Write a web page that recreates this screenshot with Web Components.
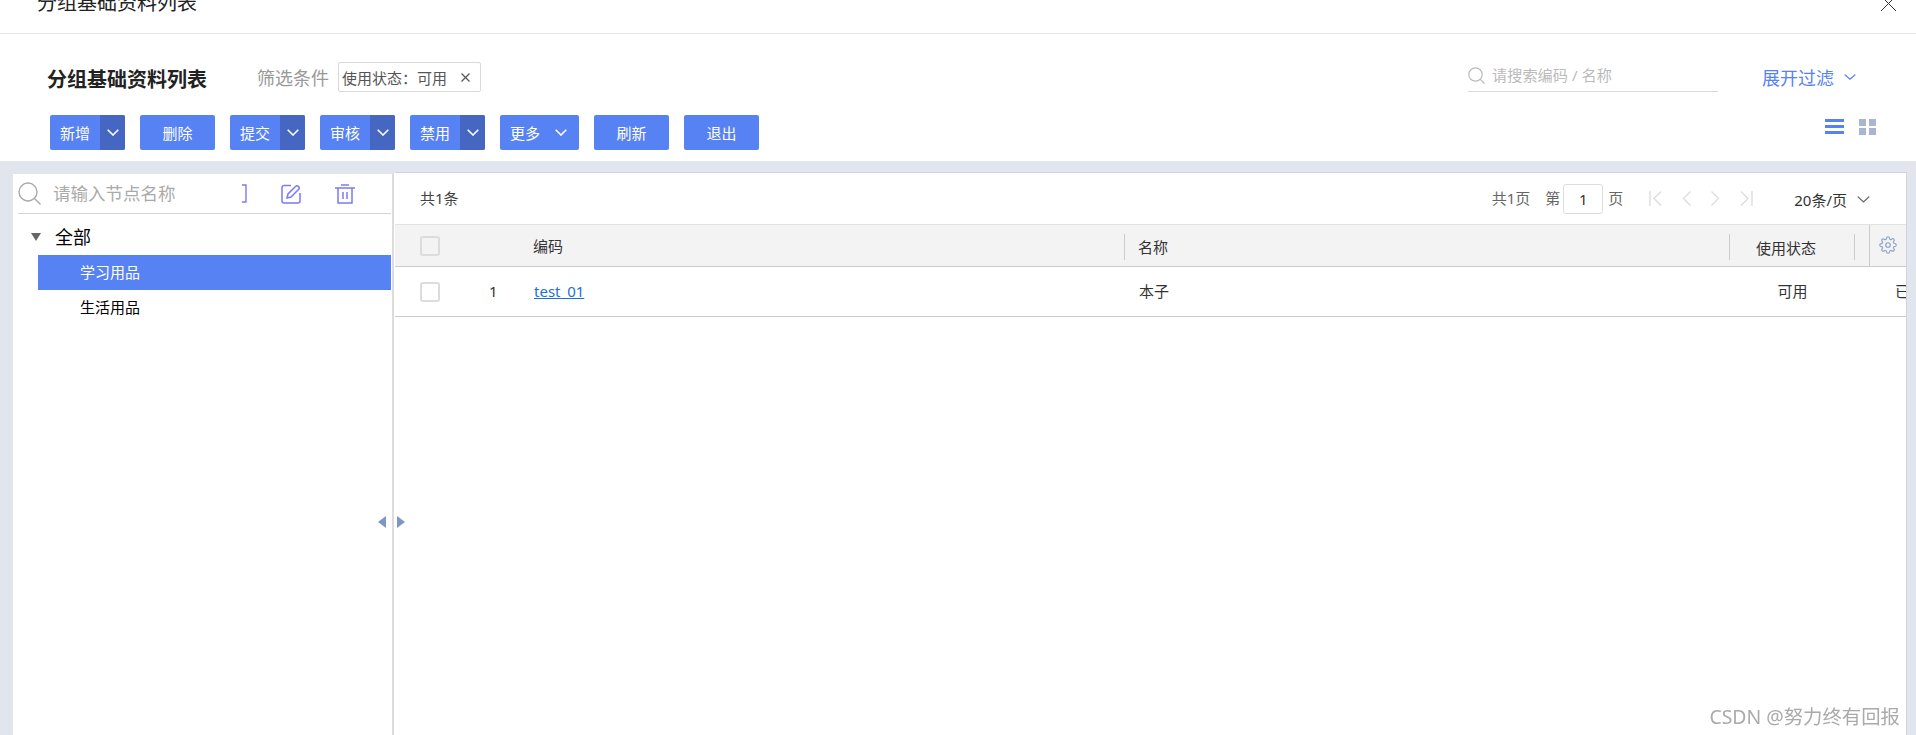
<!DOCTYPE html>
<html lang="zh">
<head>
<meta charset="utf-8">
<title>分组基础资料列表</title>
<style>
  html, body { margin: 0; height: 100%; overflow: hidden; background: #fff; }
  body {
    display: flex;
    flex-direction: column;
    font-family: "Noto Sans", "Noto Sans CJK SC", sans-serif;
    color: #333;
  }
</style>
</head>
<body>
<modal-head>分组基础资料列表</modal-head>
<list-toolbar></list-toolbar>
<main-area>
  <tree-panel slot="left"></tree-panel>
  <grid-panel slot="right"></grid-panel>
</main-area>
<water-mark>CSDN @努力终有回报</water-mark>

<script>
const chevron = (w, h, color, sw) => `
  <svg width="${w}" height="${h}" viewBox="0 0 12 7" fill="none" stroke="${color}" stroke-width="${sw}" preserveAspectRatio="none"><path d="M.7.7 6 6l5.3-5.3"/></svg>`;

class modalHead extends HTMLElement {
  constructor() {
    super();
    this.shadowDOM = this.attachShadow({ mode: "open" });
  }
  connectedCallback() {
    this.shadowDOM.innerHTML = `
      <style>
        :host {
          display: flex;
          flex: none;
          justify-content: space-between;
          height: 33px;
          border-bottom: 1px solid #e8e8e8;
          padding: 0 20px 0 37px;
          overflow: hidden;
          color: #222;
        }
        .title { font-size: 20px; line-height: 20px; margin-top: -7px; }
        svg { margin-top: -4px; }
      </style>
      <div class="title"><slot></slot></div>
      <svg width="15" height="15" viewBox="0 0 15 15" stroke="#333" fill="none"><path d="M0 0 15 15M15 0 0 15"/></svg>`;
  }
}
customElements.define("modal-head", modalHead);

class toolButton extends HTMLElement {
  constructor() {
    super();
    this.shadowDOM = this.attachShadow({ mode: "open" });
  }
  connectedCallback() {
    const kind = this.getAttribute("kind") || "plain";
    let tail = "";
    if (kind === "split") tail = `<span class="drop">${chevron(12, 7, "#fff", 1.6)}</span>`;
    if (kind === "more") tail = `<span class="more">${chevron(12, 7, "#fff", 1.6)}</span>`;
    this.shadowDOM.innerHTML = `
      <style>
        :host {
          display: flex;
          flex: none;
          width: ${kind === "more" ? 79 : 75}px;
          height: 35px;
          border-radius: 2px;
          overflow: hidden;
          background: #5782f3;
          color: #fff;
          font-size: 15px;
        }
        .text { flex: 1; display: flex; align-items: center; justify-content: center; }
        .drop { flex: none; width: 25px; background: #4567c1; display: flex; align-items: center; justify-content: center; }
        .more { flex: none; width: 24px; padding-left: 15px; display: flex; align-items: center; }
        :host([kind="more"]) .text { flex: none; width: 40px; justify-content: flex-end; }
      </style>
      <span class="text"><slot></slot></span>${tail}`;
  }
}
customElements.define("tool-button", toolButton);

class filterTag extends HTMLElement {
  constructor() {
    super();
    this.shadowDOM = this.attachShadow({ mode: "open" });
  }
  connectedCallback() {
    this.shadowDOM.innerHTML = `
      <style>
        :host {
          display: flex;
          align-items: center;
          justify-content: space-between;
          box-sizing: border-box;
          width: 143px;
          height: 30px;
          padding: 0 10px 0 3px;
          border: 1px solid #d9d9d9;
          border-radius: 2px;
          font-size: 15px;
          color: #555;
          white-space: nowrap;
        }
      </style>
      <slot></slot>
      <svg width="9" height="9" viewBox="0 0 9 9" stroke="#555" stroke-width="1.2"><path d="M.5.5l8 8M8.5.5l-8 8"/></svg>`;
  }
}
customElements.define("filter-tag", filterTag);

class listToolbar extends HTMLElement {
  constructor() {
    super();
    this.shadowDOM = this.attachShadow({ mode: "open" });
  }
  connectedCallback() {
    this.shadowDOM.innerHTML = `
      <style>
        :host {
          display: block;
          flex: none;
          height: 127px;
          box-sizing: border-box;
          padding-top: 28px;
        }
        .top, .bottom { display: flex; align-items: center; }
        .top { height: 30px; padding: 0 60px 0 47px; }
        .bottom { height: 35px; margin-top: 23px; padding: 0 40px 0 50px; gap: 15px; }
        .title { font-size: 20px; font-weight: 700; color: #222; width: 160px; margin: 2px 50px 0 0; white-space: nowrap; }
        .label { font-size: 18px; color: #999; margin-right: 9px; white-space: nowrap; }
        .search {
          margin-left: auto;
          box-sizing: border-box;
          width: 250px;
          height: 30px;
          padding-bottom: 2px;
          border-bottom: 1px solid #d9d9d9;
          display: flex;
          align-items: center;
          gap: 7px;
          font-size: 15.2px;
          color: #bbb;
          white-space: nowrap;
        }
        .search span { margin-top: -3px; }
        .expand {
          margin-left: 44px;
          font-size: 18px;
          color: #5782f3;
          display: flex;
          align-items: center;
          gap: 10px;
          white-space: nowrap;
        }
        .views { margin-left: auto; display: flex; gap: 15px; align-self: flex-start; margin-top: 4px; }
      </style>
      <div class="top">
        <div class="title">分组基础资料列表</div>
        <div class="label">筛选条件</div>
        <filter-tag>使用状态：可用</filter-tag>
        <div class="search">
          <svg width="17" height="17" viewBox="0 0 17 17" fill="none" stroke="#bbb" stroke-width="1.2"><circle cx="7.5" cy="7.5" r="6.7"/><path d="M12.3 12.3 16.5 16.5"/></svg>
          <span>请搜索编码 / 名称</span>
        </div>
        <div class="expand">展开过滤 ${chevron(12, 6, "#5782f3", 1.4)}</div>
      </div>
      <div class="bottom">
        <tool-button kind="split">新增</tool-button>
        <tool-button>删除</tool-button>
        <tool-button kind="split">提交</tool-button>
        <tool-button kind="split">审核</tool-button>
        <tool-button kind="split">禁用</tool-button>
        <tool-button kind="more">更多</tool-button>
        <tool-button>刷新</tool-button>
        <tool-button>退出</tool-button>
        <div class="views">
          <svg width="19" height="16" viewBox="0 0 19 16" fill="#5782f3"><rect width="19" height="3"/><rect y="6" width="19" height="3"/><rect y="12" width="19" height="3"/></svg>
          <svg width="17" height="16" viewBox="0 0 17 16" fill="#a9b5d3"><rect width="7" height="7"/><rect x="10" width="7" height="7"/><rect y="9" width="7" height="7"/><rect x="10" y="9" width="7" height="7"/></svg>
        </div>
      </div>`;
  }
}
customElements.define("list-toolbar", listToolbar);

class mainArea extends HTMLElement {
  constructor() {
    super();
    this.shadowDOM = this.attachShadow({ mode: "open" });
  }
  connectedCallback() {
    this.shadowDOM.innerHTML = `
      <style>
        :host {
          display: flex;
          flex: 1;
          min-height: 0;
          box-sizing: border-box;
          background: #e1e5ee;
          padding: 11px 9px 0 13px;
        }
        .left { width: 379px; flex: none; margin-top: 2px; background: #fff; position: relative; }
        .bar { width: 2px; flex: none; margin-top: 1px; background: #dcdcdc; }
        .right { flex: 1; min-width: 0; position: relative; }
        .arrow { position: absolute; width: 0; height: 0; border: 6px solid transparent; }
        .arrow.l { top: 342px; right: 6px; border-left: 0; border-right: 8px solid #7d96c4; }
        .arrow.r { top: 344px; left: 3px; border-right: 0; border-left: 8px solid #7d96c4; z-index: 2; }
      </style>
      <div class="left"><slot name="left"></slot><i class="arrow l"></i></div>
      <div class="bar"></div>
      <div class="right"><i class="arrow r"></i><slot name="right"></slot></div>`;
  }
}
customElements.define("main-area", mainArea);

class treePanel extends HTMLElement {
  constructor() {
    super();
    this.shadowDOM = this.attachShadow({ mode: "open" });
  }
  connectedCallback() {
    this.shadowDOM.innerHTML = `
      <style>
        :host { display: block; color: #000; }
        .search {
          display: flex;
          align-items: center;
          height: 39px;
          margin-left: 5px;
          margin-right: 1px;
          border-bottom: 1px solid #d4d4d4;
          font-size: 17.5px;
          color: #aaa;
          white-space: nowrap;
        }
        .search .hint { margin: -2px 0 0 12px; width: 189px; }
        .search svg.mag { margin-top: -1px; flex: none; }
        .ico { flex: none; }
        .root {
          display: flex;
          align-items: center;
          box-sizing: border-box;
          height: 41px;
          padding: 2px 0 0 18px;
          font-size: 18px;
          gap: 14px;
        }
        .root i { width: 0; height: 0; margin-top: 2px; border: 5px solid transparent; border-top: 8px solid #666; border-bottom: 0; }
        .node { height: 35px; line-height: 35px; margin-left: 25px; margin-right: 1px; padding-left: 42px; font-size: 15px; }
        .node.on { background: #5782f3; color: #fff; }
      </style>
      <div class="search">
        <svg class="mag" width="23" height="23" viewBox="0 0 23 23" fill="none" stroke="#aaa" stroke-width="1.4"><circle cx="10" cy="10" r="9"/><path d="M16.5 16.5 22.5 22.5"/></svg>
        <span class="hint">请输入节点名称</span>
        <svg class="ico" width="5" height="19" viewBox="0 0 5 19" fill="none" stroke="#7b7bf5" stroke-width="1.4"><path d="M0 1h4v17H0"/></svg>
        <svg class="ico" style="margin-left:34px" width="20" height="20" viewBox="0 0 20 20" fill="none" stroke="#7b7bf5" stroke-width="1.5"><path d="M10 1.500H3A2 2 0 0 0 1 3.500V17a2 2 0 0 0 2 2h14a2 2 0 0 0 2-2V9"/><path d="M6 14l1-4L14.500 2.500a2 2 0 0 1 3 3L10 13z"/></svg>
        <svg class="ico" style="margin-left:34px" width="20" height="20" viewBox="0 0 20 20" fill="none" stroke="#7b7bf5" stroke-width="1.5"><path d="M0 4h20M6 1h8M3 4v15h14V4M8 8v7M12 8v7"/></svg>
      </div>
      <div class="root"><i></i><span>全部</span></div>
      <div class="node on">学习用品</div>
      <div class="node">生活用品</div>`;
  }
}
customElements.define("tree-panel", treePanel);

class checkBox extends HTMLElement {
  constructor() {
    super();
    this.shadowDOM = this.attachShadow({ mode: "open" });
  }
  connectedCallback() {
    this.shadowDOM.innerHTML = `
      <style>
        :host {
          display: block;
          box-sizing: border-box;
          width: 20px;
          height: 20px;
          border: 2px solid #dcdcdc;
          border-radius: 3px;
          background: transparent;
        }
      </style>`;
  }
}
customElements.define("check-box", checkBox);

class pagerBar extends HTMLElement {
  constructor() {
    super();
    this.shadowDOM = this.attachShadow({ mode: "open" });
  }
  connectedCallback() {
    const arrow = (d, w) => `<svg width="${w}" height="15" viewBox="0 0 ${w} 15" fill="none" stroke="#ddd" stroke-width="1.4"><path d="${d}"/></svg>`;
    this.shadowDOM.innerHTML = `
      <style>
        :host {
          display: flex;
          align-items: center;
          height: 49px;
          padding: 0 36px 2px 25px;
          font-size: 15px;
          color: #666;
          white-space: nowrap;
        }
        .count { color: #444; margin-right: auto; }
        .page {
          box-sizing: border-box;
          width: 40px;
          height: 30px;
          margin: 2px 5px 0 3px;
          border: 1px solid #ddd;
          border-radius: 3px;
          text-align: center;
          line-height: 28px;
          color: #333;
        }
        .nav { display: flex; align-items: center; gap: 20px; margin: 2px 41px 0 26px; }
        .size { color: #333; display: flex; align-items: center; gap: 10px; margin-top: 3px; }
        .gap { margin-right: 15px; }
      </style>
      <span class="count">共1条</span>
      <span class="gap">共1页</span>
      <span>第</span>
      <span class="page">1</span>
      <span>页</span>
      <div class="nav">
        ${arrow("M1 0v15M12 .5 5 7.500l7 7", 13)}
        ${arrow("M8.500.5 1.500 7.500l7 7", 9)}
        ${arrow("M.5.5 7.500 7.500l-7 7", 9)}
        ${arrow("M1 .5 8 7.500l-7 7M12 0v15", 13)}
      </div>
      <span class="size">20条/页 ${chevron(13, 7, "#666", 1.2)}</span>`;
  }
}
customElements.define("pager-bar", pagerBar);

class gridPanel extends HTMLElement {
  constructor() {
    super();
    this.shadowDOM = this.attachShadow({ mode: "open" });
  }
  connectedCallback() {
    this.shadowDOM.innerHTML = `
      <style>
        :host {
          display: block;
          height: 100%;
          box-sizing: border-box;
          background: #fff;
          border-top: 1px solid #cfd3da;
          border-right: 1px solid #cfd3da;
          border-left: 1px solid #fff;
          font-size: 15px;
          overflow: hidden;
        }
        .row {
          display: grid;
          grid-template-columns: 138px 591px 605px 125px 15px 1fr;
          align-items: center;
          box-sizing: border-box;
          color: #333;
          white-space: nowrap;
        }
        .head {
          height: 43px;
          background: #f3f3f3;
          border-top: 1px solid #e2e2e2;
          border-bottom: 1px solid #ccc;
        }
        .body { height: 50px; padding-bottom: 2px; border-bottom: 1px solid #ccc; }
        .body check-box { margin-top: 2px; }
        .first { display: flex; align-items: center; padding-left: 25px; }
        .num { margin-left: 49px; }
        .sep { align-self: stretch; margin: 9px 0 6px; border-left: 1px solid #ccc; display: flex; align-items: center; }
        .sep.name { padding: 0 0 2px 13px; }
        .sep.state { justify-content: center; padding-right: 12px; }
        .spacer { align-self: stretch; margin: 9px 0 6px; border-left: 1px solid #ccc; }
        .gear { align-self: stretch; border-left: 1px solid #ccc; display: flex; align-items: center; padding: 0 0 2px 9px; }
        .name { padding-left: 15px; }
        .state { text-align: center; }
        .body .state { padding-left: 2px; }
        a { color: #1c6fd8; margin-left: 1px; }
        .clip { grid-column: 5 / 7; padding-left: 41px; overflow: hidden; }
      </style>
      <pager-bar></pager-bar>
      <div class="row head">
        <div class="first"><check-box></check-box></div>
        <div>编码</div>
        <div class="sep name">名称</div>
        <div class="sep state">使用状态</div>
        <div class="spacer"></div>
        <div class="gear">
          <svg width="18" height="18" viewBox="0 0 24 24" fill="none" stroke="#8fa3cc" stroke-width="1.6"><circle cx="12" cy="12" r="3"/><path d="M19.4 15a1.65 1.65 0 0 0 .33 1.82l.06.06a2 2 0 0 1 0 2.83 2 2 0 0 1-2.83 0l-.06-.06a1.65 1.65 0 0 0-1.82-.33 1.65 1.65 0 0 0-1 1.51V21a2 2 0 0 1-2 2 2 2 0 0 1-2-2v-.09A1.65 1.65 0 0 0 9 19.4a1.65 1.65 0 0 0-1.82.33l-.06.06a2 2 0 0 1-2.83 0 2 2 0 0 1 0-2.83l.06-.06a1.65 1.65 0 0 0 .33-1.82 1.65 1.65 0 0 0-1.51-1H3a2 2 0 0 1-2-2 2 2 0 0 1 2-2h.09A1.65 1.65 0 0 0 4.600 9a1.65 1.65 0 0 0-.33-1.82l-.06-.06a2 2 0 0 1 0-2.83 2 2 0 0 1 2.83 0l.06.06a1.65 1.65 0 0 0 1.82.33H9a1.65 1.65 0 0 0 1-1.51V3a2 2 0 0 1 2-2 2 2 0 0 1 2 2v.09a1.65 1.65 0 0 0 1 1.51 1.65 1.65 0 0 0 1.82-.33l.06-.06a2 2 0 0 1 2.83 0 2 2 0 0 1 0 2.83l-.06.06a1.65 1.65 0 0 0-.33 1.82V9a1.65 1.65 0 0 0 1.51 1H21a2 2 0 0 1 2 2 2 2 0 0 1-2 2h-.09a1.65 1.65 0 0 0-1.51 1z"/></svg>
        </div>
      </div>
      <div class="row body">
        <div class="first"><check-box></check-box><span class="num">1</span></div>
        <div><a href="#">test_01</a></div>
        <div class="name">本子</div>
        <div class="state">可用</div>
        <div class="clip">已</div>
      </div>`;
  }
}
customElements.define("grid-panel", gridPanel);

class waterMark extends HTMLElement {
  constructor() {
    super();
    this.shadowDOM = this.attachShadow({ mode: "open" });
  }
  connectedCallback() {
    this.shadowDOM.innerHTML = `
      <style>
        :host {
          position: fixed;
          right: 16px;
          bottom: 5px;
          font-size: 19.4px;
          color: #aaa;
          white-space: nowrap;
        }
      </style>
      <slot></slot>`;
  }
}
customElements.define("water-mark", waterMark);
</script>
</body>
</html>
